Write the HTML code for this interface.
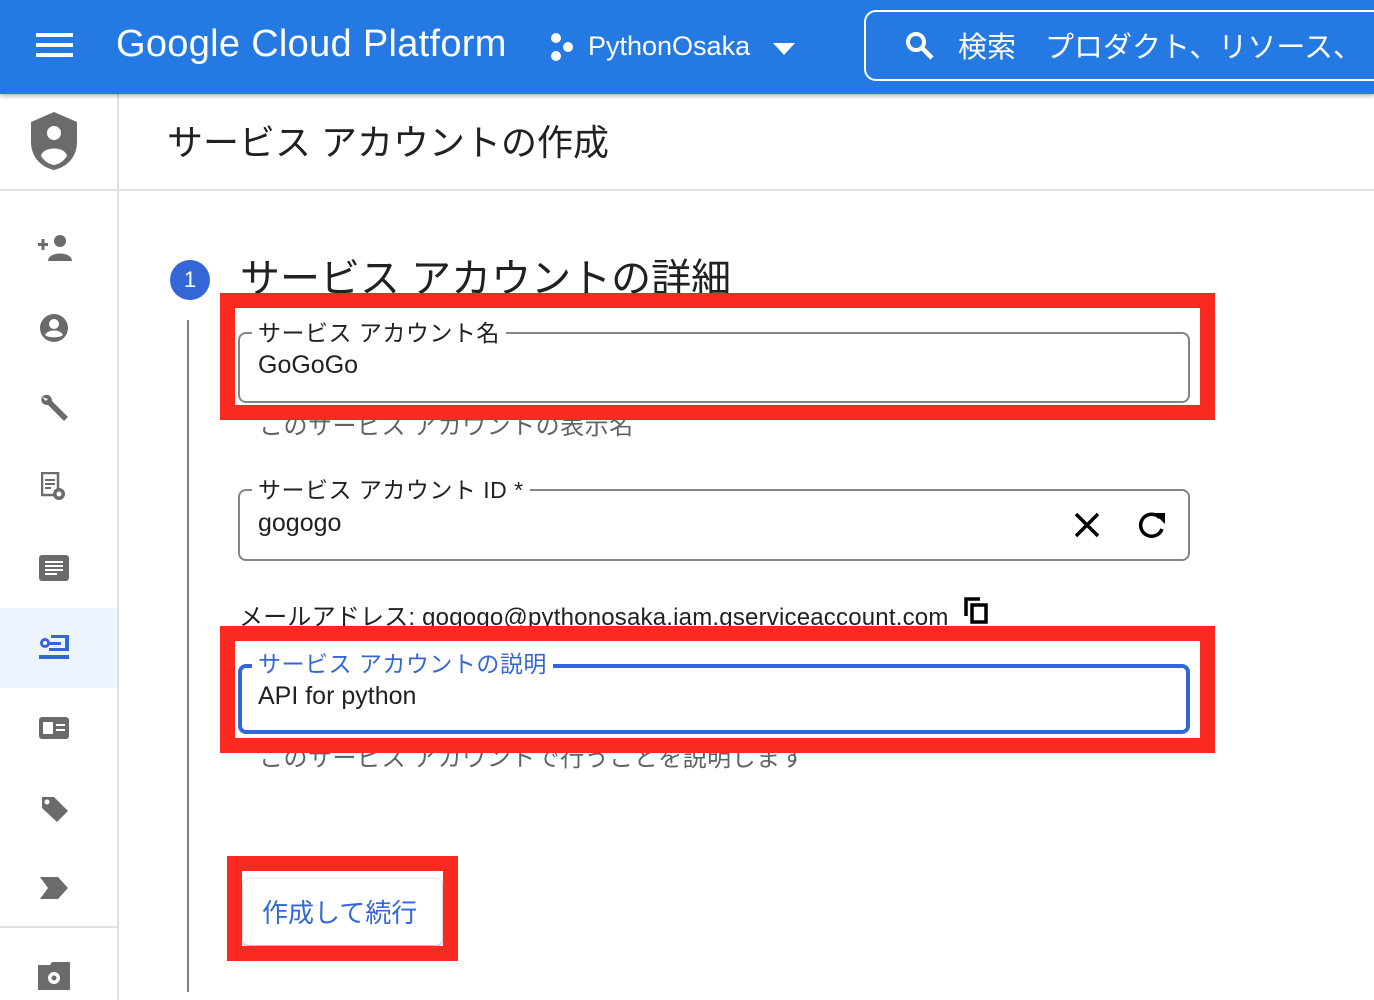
<!DOCTYPE html>
<html><head><meta charset="utf-8"><style>
*{margin:0;padding:0;box-sizing:border-box}
body{width:1374px;height:1000px;overflow:hidden;background:#fff;font-family:"Liberation Sans","Noto Sans CJK JP",sans-serif;position:relative;color:#202124}
.a{position:absolute}
.hdr{left:0;top:0;width:1374px;height:94px;background:#2579e3;box-shadow:0 2px 4px rgba(0,0,0,.3);z-index:2}
.red{position:absolute;border:15px solid #fb2a20}
.fld{position:absolute;border:2px solid #80868b;border-radius:8px}
.lbl{position:absolute;background:#fff;padding:0 6px;font-size:23px;color:#202124;white-space:nowrap;letter-spacing:0.5px}
.ico{position:absolute;left:38px}
</style></head><body>
<div class="a hdr">
 <div class="a" style="left:36px;top:33px;width:37px;height:4px;background:#fff;box-shadow:0 10px 0 #fff,0 20px 0 #fff"></div>
 <div class="a" style="left:116px;top:23px;color:#fff;font-size:38px;letter-spacing:0.3px">Google Cloud Platform</div>
 <svg class="a" style="left:548px;top:32px" width="28" height="30" viewBox="0 0 28 30"><g fill="#fff"><circle cx="8" cy="6" r="5"/><circle cx="20" cy="15" r="5"/><circle cx="8" cy="24" r="5"/></g></svg>
 <div class="a" style="left:588px;top:31px;color:#fff;font-size:27px">PythonOsaka</div>
 <div class="a" style="left:773px;top:43px;width:0;height:0;border-left:11px solid transparent;border-right:11px solid transparent;border-top:12px solid #fff"></div>
 <div class="a" style="left:864px;top:10px;width:530px;height:71px;border:2px solid #fff;border-radius:12px"></div>
 <svg class="a" style="left:904px;top:30px" width="32" height="32" viewBox="0 0 32 32"><circle cx="12" cy="12" r="8" fill="none" stroke="#fff" stroke-width="4"/><path d="M18 18l10 10" stroke="#fff" stroke-width="4.5"/></svg>
 <div class="a" style="left:958px;top:24px;color:#fff;font-size:29px;white-space:nowrap">検索　プロダクト、リソース、</div>
</div>
<!-- sidebar -->
<div class="a" style="left:117px;top:94px;width:2px;height:906px;background:#e0e0e0"></div>
<div class="a" style="left:0;top:189px;width:1374px;height:2px;background:#e0e0e0"></div>
<div class="a" style="left:0;top:926px;width:117px;height:2px;background:#e0e0e0"></div>
<div class="a" style="left:0;top:608px;width:117px;height:80px;background:#eef4fd"></div>
<svg class="a" style="left:29px;top:112px" width="50" height="60" viewBox="0 0 50 60"><path d="M25 0L48 10V30C48 45 38 55 25 58C12 55 2 45 2 30V10Z" fill="#6b6b6b"/><circle cx="25" cy="21" r="7" fill="#fff"/><path d="M12 44C14 34 36 34 38 44C34 50 30 52 25 53C20 52 16 50 12 44Z" fill="#fff"/></svg>
<svg class="ico" style="top:233px" width="34" height="28" viewBox="0 0 34 28"><g fill="#6b6b6b"><rect x="0" y="10" width="10" height="3"/><rect x="3.5" y="6" width="3" height="11"/><circle cx="22" cy="8" r="6"/><path d="M10 28C10 18 34 18 34 28Z"/></g></svg>
<svg class="ico" style="top:314px;left:40px" width="28" height="28" viewBox="0 0 28 28"><circle cx="14" cy="14" r="14" fill="#6b6b6b"/><circle cx="14" cy="10" r="5" fill="#fff"/><path d="M5 21C8 15 20 15 23 21C20 24 8 24 5 21Z" fill="#fff"/></svg>
<svg class="ico" style="top:393px" width="32" height="32" viewBox="0 0 32 32"><path d="M4 4C8 0 14 2 14 8L30 24L26 28L10 12C4 12 2 8 4 4L8 8L10 6Z" fill="#6b6b6b"/></svg>
<svg class="ico" style="top:472px;left:41px" width="26" height="30" viewBox="0 0 26 30"><rect x="1" y="1" width="16" height="22" fill="none" stroke="#6b6b6b" stroke-width="2.5"/><g fill="#6b6b6b"><rect x="4" y="7" width="10" height="2"/><rect x="4" y="11" width="10" height="2"/><rect x="4" y="15" width="6" height="2"/><circle cx="18" cy="22" r="6"/></g><circle cx="18" cy="22" r="2.5" fill="#fff"/></svg>
<svg class="ico" style="top:555px;left:39px" width="30" height="26" viewBox="0 0 30 26"><rect width="30" height="26" rx="3" fill="#6b6b6b"/><g fill="#fff"><rect x="6" y="6" width="18" height="2"/><rect x="6" y="10" width="18" height="2"/><rect x="6" y="14" width="18" height="2"/><rect x="6" y="18" width="12" height="2"/></g></svg>
<svg class="ico" style="top:633px;left:39px" width="30" height="28" viewBox="0 0 30 28"><g fill="#3367d6"><circle cx="6" cy="10" r="5"/><rect x="0" y="22" width="30" height="4"/><rect x="12" y="2" width="18" height="3"/><rect x="26" y="2" width="4" height="16"/><rect x="10" y="15" width="20" height="3"/><rect x="10" y="9" width="12" height="3"/></g><circle cx="6" cy="10" r="2" fill="#fff"/></svg>
<svg class="ico" style="top:717px;left:39px" width="30" height="22" viewBox="0 0 30 22"><rect width="30" height="22" rx="3" fill="#6b6b6b"/><rect x="4" y="5" width="10" height="12" fill="#fff"/><rect x="17" y="7" width="9" height="2" fill="#fff"/><rect x="17" y="12" width="9" height="2" fill="#fff"/></svg>
<svg class="ico" style="top:795px;left:40px" width="30" height="28" viewBox="0 0 30 28"><path d="M2 2H14L28 16L17 27L2 13Z" fill="#6b6b6b"/><circle cx="7" cy="7" r="2.5" fill="#fff"/></svg>
<svg class="ico" style="top:877px;left:40px" width="28" height="22" viewBox="0 0 28 22"><path d="M0 0H18L28 11L18 22H0L8 11Z" fill="#6b6b6b"/></svg>
<svg class="ico" style="top:962px;left:38px" width="32" height="28" viewBox="0 0 32 28"><path d="M0 3H12L14 0H32V28H0Z" fill="#6b6b6b"/><circle cx="16" cy="16" r="6" fill="#fff"/><circle cx="16" cy="16" r="2.5" fill="#6b6b6b"/></svg>
<!-- content -->
<div class="a" style="left:167px;top:114px;font-size:36px;white-space:nowrap">サービス アカウントの作成</div>
<div class="a" style="left:170px;top:260px;width:40px;height:40px;border-radius:50%;background:#3367d6;color:#fff;font-size:22px;text-align:center;line-height:40px">1</div>
<div class="a" style="left:240px;top:246px;font-size:40px;white-space:nowrap">サービス アカウントの詳細</div>
<div class="a" style="left:187px;top:320px;width:2px;height:672px;background:#808080"></div>

<div class="fld" style="left:238px;top:332px;width:952px;height:71px"></div>
<div class="lbl" style="left:252px;top:314px">サービス アカウント名</div>
<div class="a" style="left:258px;top:351px;font-size:25px">GoGoGo</div>
<div class="a" style="left:259px;top:406px;font-size:24px;color:#5f6368;white-space:nowrap;letter-spacing:0.5px">このサービス アカウントの表示名</div>

<div class="fld" style="left:238px;top:489px;width:952px;height:72px"></div>
<div class="lbl" style="left:252px;top:471px">サービス アカウント ID *</div>
<div class="a" style="left:258px;top:509px;font-size:25px">gogogo</div>
<svg class="a" style="left:1073px;top:511px" width="28" height="28" viewBox="0 0 28 28"><path d="M3 3L25 25M25 3L3 25" stroke="#000" stroke-width="3.5"/></svg>
<svg class="a" style="left:1137px;top:510px" width="30" height="30" viewBox="0 0 30 30"><path d="M23 8A11 11 0 1 0 25 19" fill="none" stroke="#000" stroke-width="3.5"/><path d="M17 3H28V14Z" fill="#000"/></svg>
<div class="a" style="left:239px;top:597px;font-size:24px;white-space:nowrap;letter-spacing:0.2px">メールアドレス: gogogo@pythonosaka.iam.gserviceaccount.com</div>
<svg class="a" style="left:963px;top:596px" width="26" height="28" viewBox="0 0 26 28"><path d="M3 20V3H17" fill="none" stroke="#000" stroke-width="3.5"/><rect x="9" y="9" width="14" height="17" fill="none" stroke="#000" stroke-width="3.5"/></svg>

<div class="a" style="left:238px;top:664px;width:952px;height:70px;border:4px solid #3367d6;border-radius:8px"></div>
<div class="lbl" style="left:252px;top:645px;color:#3367d6">サービス アカウントの説明</div>
<div class="a" style="left:258px;top:682px;font-size:25px">API for python</div>
<div class="a" style="left:259px;top:738px;font-size:24px;color:#5f6368;white-space:nowrap;letter-spacing:0.5px">このサービス アカウントで行うことを説明します</div>

<div class="red" style="left:220px;top:293px;width:995px;height:127px"></div>
<div class="red" style="left:220px;top:626px;width:995px;height:127px"></div>

<div class="a" style="left:243px;top:879px;width:199px;height:66px;background:#fff;border-radius:6px;box-shadow:0 1px 3px rgba(0,0,0,.4)"></div>
<div class="a" style="left:262px;top:893px;font-size:26px;color:#3367d6;white-space:nowrap">作成して続行</div>
<div class="red" style="left:227px;top:856px;width:231px;height:105px"></div>
</body></html>
